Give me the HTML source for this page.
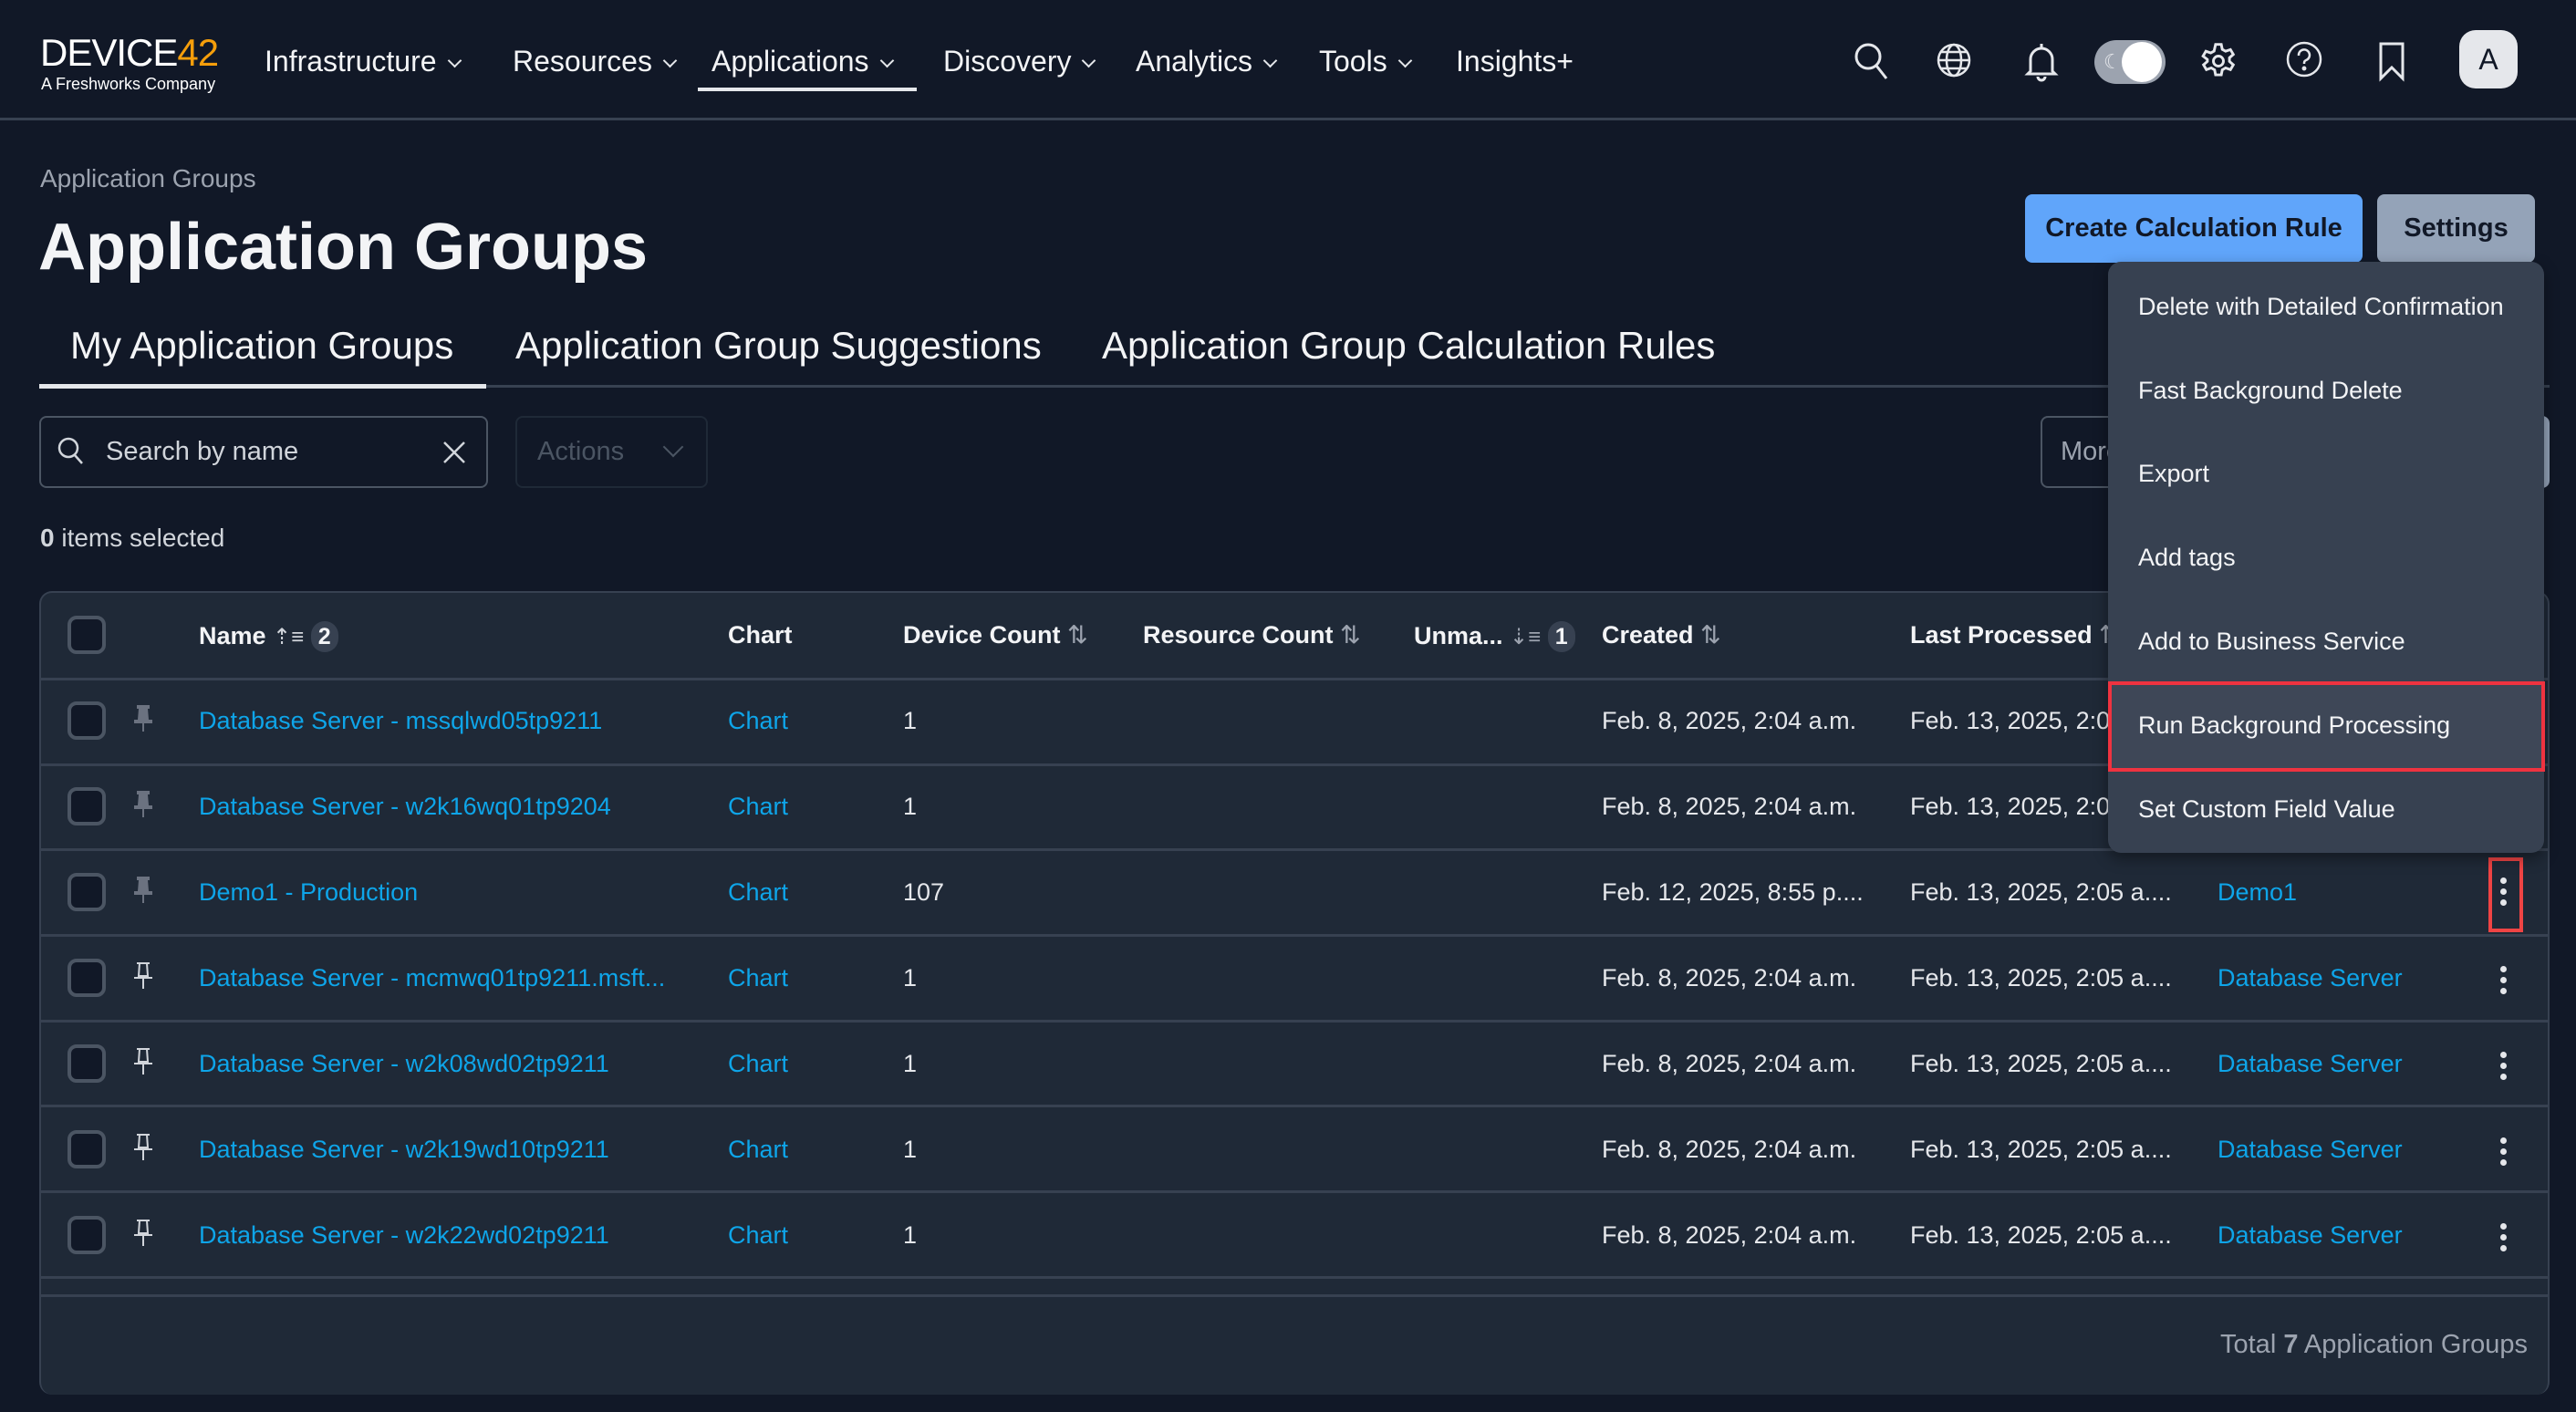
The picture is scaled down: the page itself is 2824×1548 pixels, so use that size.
<!DOCTYPE html>
<html><head><meta charset="utf-8"><style>
*{box-sizing:border-box;margin:0;padding:0}
body{width:2824px;height:1548px;background:#111827;font-family:"Liberation Sans",sans-serif;color:#e5e7eb;position:relative;overflow:hidden}
.a{position:absolute;white-space:nowrap}
.nav{font-size:32px;color:#f3f4f6;top:49px}
.chev{display:inline-block;width:11px;height:11px;border-right:2.5px solid #e5e7eb;border-bottom:2.5px solid #e5e7eb;transform:rotate(45deg);margin-left:14px;vertical-align:6px}
.ic{position:absolute;top:44px}
.cb{position:absolute;left:74px;width:42px;height:42px;border:4px solid #4b5563;border-radius:10px;background:#111827}
.row{position:absolute;left:45px;width:2750px;height:94px;border-top:3px solid #374151}
.t{position:absolute;font-size:27px;white-space:nowrap}
.lnk{color:#0ea5e9}
.th{font-weight:bold;color:#f3f4f6;font-size:27px}
.keb{position:absolute;left:2741px;width:7px}
.keb i{display:block;width:7px;height:7px;border-radius:50%;background:#e5e7eb;margin-bottom:5px}
.mi{position:absolute;left:2344px;font-size:27px;color:#f3f4f6}
.tab{font-size:42px;color:#f3f4f6;top:355px}
</style></head><body>
<!-- Nav -->
<div class="a" style="left:44px;top:34px;font-size:42px;color:#fff;letter-spacing:-1px;font-family:'Liberation Sans Narrow','Liberation Sans',sans-serif">DEVICE<span style="color:#f59e0b">42</span></div>
<div class="a" style="left:45px;top:82px;font-size:18px;color:#fff">A Freshworks Company</div>
<div class="a nav" style="left:290px">Infrastructure<span class="chev"></span></div>
<div class="a nav" style="left:562px">Resources<span class="chev"></span></div>
<div class="a nav" style="left:780px">Applications<span class="chev"></span></div>
<div class="a" style="left:765px;top:96px;width:240px;height:4px;background:#e5e7eb"></div>
<div class="a nav" style="left:1034px">Discovery<span class="chev"></span></div>
<div class="a nav" style="left:1245px">Analytics<span class="chev"></span></div>
<div class="a nav" style="left:1446px">Tools<span class="chev"></span></div>
<div class="a nav" style="left:1596px">Insights+</div>
<svg class="ic" style="left:2030px" width="44" height="46" viewBox="0 0 44 46" fill="none" stroke="#e5e7eb" stroke-width="3"><circle cx="18" cy="18" r="13"/><path d="M27 28l11 14"/></svg>
<svg class="ic" style="left:2120px" width="44" height="44" viewBox="0 0 44 44" fill="none" stroke="#e5e7eb" stroke-width="2.5"><circle cx="22" cy="22" r="17"/><ellipse cx="22" cy="22" rx="8" ry="17"/><path d="M5 22h34M8 13h28M8 31h28"/></svg>
<svg class="ic" style="left:2218px" width="40" height="46" viewBox="0 0 40 46" fill="none" stroke="#e5e7eb" stroke-width="3"><path d="M8 34V21a12 12 0 0 1 24 0v13l3 3H5z"/><path d="M20 4v5M16 40a4 4 0 0 0 8 0"/></svg>
<div class="a" style="left:2296px;top:44px;width:78px;height:48px;border-radius:24px;background:#9ca3af"></div>
<div class="a" style="left:2326px;top:46px;width:44px;height:44px;border-radius:50%;background:#fff"></div>
<div class="a" style="left:2306px;top:55px;font-size:22px;color:#e5e7eb">☾</div>
<svg class="ic" style="left:2410px" width="44" height="46" viewBox="0 0 24 24" fill="none" stroke="#e5e7eb" stroke-width="1.6"><path d="M10.3 2h3.4l.6 3 2 1.1 2.9-1 1.7 2.9-2.3 2v2.2l2.3 2-1.7 2.9-2.9-1-2 1.1-.6 3h-3.4l-.6-3-2-1.1-2.9 1-1.7-2.9 2.3-2V11L2.8 9l1.7-2.9 2.9 1 2-1.1z"/><circle cx="12" cy="12" r="3"/></svg>
<svg class="ic" style="left:2505px" width="42" height="42" viewBox="0 0 42 42" fill="none" stroke="#e5e7eb" stroke-width="2.5"><circle cx="21" cy="21" r="18"/><path d="M15 17a6 6 0 1 1 8 5c-2 1-2 2-2 4"/><circle cx="21" cy="31" r="1.2" fill="#e5e7eb"/></svg>
<svg class="ic" style="left:2606px" width="32" height="46" viewBox="0 0 32 46" fill="none" stroke="#e5e7eb" stroke-width="3"><path d="M4 4h24v38l-12-12-12 12z"/></svg>
<div class="a" style="left:2696px;top:33px;width:64px;height:64px;border-radius:18px;background:#e5e7eb;color:#111827;font-size:32px;text-align:center;line-height:64px">A</div>
<div class="a" style="left:0;top:129px;width:2824px;height:3px;background:#374151"></div>

<!-- Header -->
<div class="a" style="left:44px;top:180px;font-size:28px;color:#9ca3af">Application Groups</div>
<div class="a" style="left:42px;top:230px;font-size:72px;font-weight:bold;color:#f3f4f6">Application Groups</div>
<div class="a" style="left:2220px;top:213px;width:370px;height:75px;border-radius:8px;background:#60a5fa;color:#111827;font-size:29px;font-weight:bold;text-align:center;line-height:75px">Create Calculation Rule</div>
<div class="a" style="left:2606px;top:213px;width:173px;height:75px;border-radius:8px;background:#94a3b8;color:#111827;font-size:29px;font-weight:bold;text-align:center;line-height:75px">Settings</div>

<!-- Tabs -->
<div class="a tab" style="left:77px">My Application Groups</div>
<div class="a tab" style="left:565px">Application Group Suggestions</div>
<div class="a tab" style="left:1208px">Application Group Calculation Rules</div>
<div class="a" style="left:43px;top:422px;width:2752px;height:3px;background:#374151"></div>
<div class="a" style="left:43px;top:421px;width:490px;height:5px;background:#e5e7eb"></div>

<!-- Search/Actions -->
<div class="a" style="left:43px;top:456px;width:492px;height:79px;border:2px solid #4b5563;border-radius:8px"></div>
<svg class="a" style="left:62px;top:478px" width="32" height="36" viewBox="0 0 32 36" fill="none" stroke="#d1d5db" stroke-width="2.5"><circle cx="13" cy="13" r="10"/><path d="M20 21l8 9"/></svg>
<div class="a" style="left:116px;top:479px;font-size:29px;color:#d1d5db">Search by name</div>
<svg class="a" style="left:484px;top:482px" width="28" height="28" viewBox="0 0 28 28" stroke="#d1d5db" stroke-width="2.5"><path d="M3 3l22 22M25 3L3 25"/></svg>
<div class="a" style="left:565px;top:456px;width:211px;height:79px;border:2px solid #1f2937;border-radius:8px"></div>
<div class="a" style="left:589px;top:479px;font-size:29px;color:#4b5563">Actions</div>
<div class="a" style="left:730px;top:482px;width:16px;height:16px;border-right:2.5px solid #4b5563;border-bottom:2.5px solid #4b5563;transform:rotate(45deg)"></div>
<div class="a" style="left:2237px;top:456px;width:140px;height:79px;border:2px solid #4b5563;border-radius:8px"></div>
<div class="a" style="left:2259px;top:479px;font-size:29px;color:#9ca3af">More</div>
<div class="a" style="left:2760px;top:456px;width:35px;height:79px;border-radius:8px;background:#94a3b8"></div>
<div class="a" style="left:44px;top:574px;font-size:28px;color:#d1d5db"><b>0</b> items selected</div>

<!-- Table card -->
<div class="a" style="left:43px;top:648px;width:2752px;height:881px;background:#1f2937;border-radius:14px;border:2px solid #374151;border-bottom:none"></div>
<div class="a" style="left:45px;top:1419px;width:2750px;height:3px;background:#374151"></div>
<div class="a" style="left:2434px;top:1458px;font-size:29px;color:#9ca3af">Total <b>7</b> Application Groups</div>

<!-- Header row -->
<div class="cb" style="top:675px"></div>
<div class="t th" style="left:218px;top:681px">Name <span style="font-weight:normal;color:#d1d5db;font-size:24px">⇡≡</span> <span style="display:inline-block;width:30px;height:34px;border-radius:15px;background:#374151;text-align:center;line-height:34px;font-size:25px">2</span></div>
<div class="t th" style="left:798px;top:681px">Chart</div>
<div class="t th" style="left:990px;top:681px">Device Count <span style="font-weight:normal;color:#9ca3af">⇅</span></div>
<div class="t th" style="left:1253px;top:681px">Resource Count <span style="font-weight:normal;color:#9ca3af">⇅</span></div>
<div class="t th" style="left:1550px;top:681px">Unma... <span style="font-weight:normal;color:#9ca3af;font-size:24px">⇣≡</span> <span style="display:inline-block;width:30px;height:34px;border-radius:15px;background:#374151;text-align:center;line-height:34px;font-size:25px">1</span></div>
<div class="t th" style="left:1756px;top:681px">Created <span style="font-weight:normal;color:#9ca3af">⇅</span></div>
<div class="t th" style="left:2094px;top:681px">Last Processed <span style="font-weight:normal;color:#9ca3af">⇅</span></div>

<!-- Rows -->
<div class="row" style="top:743px"></div><div class="row" style="top:837px"></div><div class="row" style="top:930px"></div><div class="row" style="top:1024px"></div><div class="row" style="top:1118px"></div><div class="row" style="top:1211px"></div><div class="row" style="top:1305px"></div><div class="row" style="top:1399px;height:3px"></div>

<div class="cb" style="top:769px"></div>
<div class="t lnk" style="left:218px;top:775px">Database Server - mssqlwd05tp9211</div><div class="t lnk" style="left:798px;top:775px">Chart</div><div class="t" style="left:990px;top:775px">1</div><div class="t" style="left:1756px;top:775px">Feb. 8, 2025, 2:04 a.m.</div><div class="t" style="left:2094px;top:775px">Feb. 13, 2025, 2:05</div>

<div class="cb" style="top:863px"></div>
<div class="t lnk" style="left:218px;top:869px">Database Server - w2k16wq01tp9204</div><div class="t lnk" style="left:798px;top:869px">Chart</div><div class="t" style="left:990px;top:869px">1</div><div class="t" style="left:1756px;top:869px">Feb. 8, 2025, 2:04 a.m.</div><div class="t" style="left:2094px;top:869px">Feb. 13, 2025, 2:05</div>

<div class="cb" style="top:957px"></div>
<div class="t lnk" style="left:218px;top:963px">Demo1 - Production</div><div class="t lnk" style="left:798px;top:963px">Chart</div><div class="t" style="left:990px;top:963px">107</div><div class="t" style="left:1756px;top:963px">Feb. 12, 2025, 8:55 p....</div><div class="t" style="left:2094px;top:963px">Feb. 13, 2025, 2:05 a....</div><div class="t lnk" style="left:2431px;top:963px">Demo1</div>
<div class="keb" style="top:962px"><i></i><i></i><i></i></div>
<div class="a" style="left:2728px;top:940px;width:38px;height:82px;border:4px solid #ef4444"></div>

<div class="cb" style="top:1051px"></div>
<div class="t lnk" style="left:218px;top:1057px">Database Server - mcmwq01tp9211.msft...</div><div class="t lnk" style="left:798px;top:1057px">Chart</div><div class="t" style="left:990px;top:1057px">1</div><div class="t" style="left:1756px;top:1057px">Feb. 8, 2025, 2:04 a.m.</div><div class="t" style="left:2094px;top:1057px">Feb. 13, 2025, 2:05 a....</div><div class="t lnk" style="left:2431px;top:1057px">Database Server</div>
<div class="keb" style="top:1059px"><i></i><i></i><i></i></div>

<div class="cb" style="top:1145px"></div>
<div class="t lnk" style="left:218px;top:1151px">Database Server - w2k08wd02tp9211</div><div class="t lnk" style="left:798px;top:1151px">Chart</div><div class="t" style="left:990px;top:1151px">1</div><div class="t" style="left:1756px;top:1151px">Feb. 8, 2025, 2:04 a.m.</div><div class="t" style="left:2094px;top:1151px">Feb. 13, 2025, 2:05 a....</div><div class="t lnk" style="left:2431px;top:1151px">Database Server</div>
<div class="keb" style="top:1153px"><i></i><i></i><i></i></div>

<div class="cb" style="top:1239px"></div>
<div class="t lnk" style="left:218px;top:1245px">Database Server - w2k19wd10tp9211</div><div class="t lnk" style="left:798px;top:1245px">Chart</div><div class="t" style="left:990px;top:1245px">1</div><div class="t" style="left:1756px;top:1245px">Feb. 8, 2025, 2:04 a.m.</div><div class="t" style="left:2094px;top:1245px">Feb. 13, 2025, 2:05 a....</div><div class="t lnk" style="left:2431px;top:1245px">Database Server</div>
<div class="keb" style="top:1247px"><i></i><i></i><i></i></div>

<div class="cb" style="top:1333px"></div>
<div class="t lnk" style="left:218px;top:1339px">Database Server - w2k22wd02tp9211</div><div class="t lnk" style="left:798px;top:1339px">Chart</div><div class="t" style="left:990px;top:1339px">1</div><div class="t" style="left:1756px;top:1339px">Feb. 8, 2025, 2:04 a.m.</div><div class="t" style="left:2094px;top:1339px">Feb. 13, 2025, 2:05 a....</div><div class="t lnk" style="left:2431px;top:1339px">Database Server</div>
<div class="keb" style="top:1341px"><i></i><i></i><i></i></div>

<!-- pins -->
<svg class="a" style="left:145px;top:772px" width="24" height="32" viewBox="0 0 24 32" fill="#6b7280"><rect x="5" y="1" width="14" height="4"/><path d="M7 5h10l1 12h4v4H2v-4h4z"/><rect x="11" y="21" width="2" height="9"/></svg>
<svg class="a" style="left:145px;top:866px" width="24" height="32" viewBox="0 0 24 32" fill="#6b7280"><rect x="5" y="1" width="14" height="4"/><path d="M7 5h10l1 12h4v4H2v-4h4z"/><rect x="11" y="21" width="2" height="9"/></svg>
<svg class="a" style="left:145px;top:960px" width="24" height="32" viewBox="0 0 24 32" fill="#6b7280"><rect x="5" y="1" width="14" height="4"/><path d="M7 5h10l1 12h4v4H2v-4h4z"/><rect x="11" y="21" width="2" height="9"/></svg>
<svg class="a" style="left:145px;top:1054px" width="24" height="32" viewBox="0 0 24 32" fill="none" stroke="#d1d5db" stroke-width="2"><path d="M5 2h14M8 2l-1 14h10L16 2M2 18h20M12 18v12"/></svg>
<svg class="a" style="left:145px;top:1148px" width="24" height="32" viewBox="0 0 24 32" fill="none" stroke="#d1d5db" stroke-width="2"><path d="M5 2h14M8 2l-1 14h10L16 2M2 18h20M12 18v12"/></svg>
<svg class="a" style="left:145px;top:1242px" width="24" height="32" viewBox="0 0 24 32" fill="none" stroke="#d1d5db" stroke-width="2"><path d="M5 2h14M8 2l-1 14h10L16 2M2 18h20M12 18v12"/></svg>
<svg class="a" style="left:145px;top:1336px" width="24" height="32" viewBox="0 0 24 32" fill="none" stroke="#d1d5db" stroke-width="2"><path d="M5 2h14M8 2l-1 14h10L16 2M2 18h20M12 18v12"/></svg>

<!-- Dropdown menu -->
<div class="a" style="left:2311px;top:287px;width:478px;height:648px;background:#374151;border-radius:14px;box-shadow:0 6px 16px rgba(0,0,0,.4)"></div>
<div class="a" style="left:2311px;top:747px;width:479px;height:99px;background:#3e4757;border:4px solid #ef3340"></div>
<div class="mi" style="top:321px">Delete with Detailed Confirmation</div>
<div class="mi" style="top:413px">Fast Background Delete</div>
<div class="mi" style="top:504px">Export</div>
<div class="mi" style="top:596px">Add tags</div>
<div class="mi" style="top:688px">Add to Business Service</div>
<div class="mi" style="top:780px">Run Background Processing</div>
<div class="mi" style="top:872px">Set Custom Field Value</div>
</body></html>
